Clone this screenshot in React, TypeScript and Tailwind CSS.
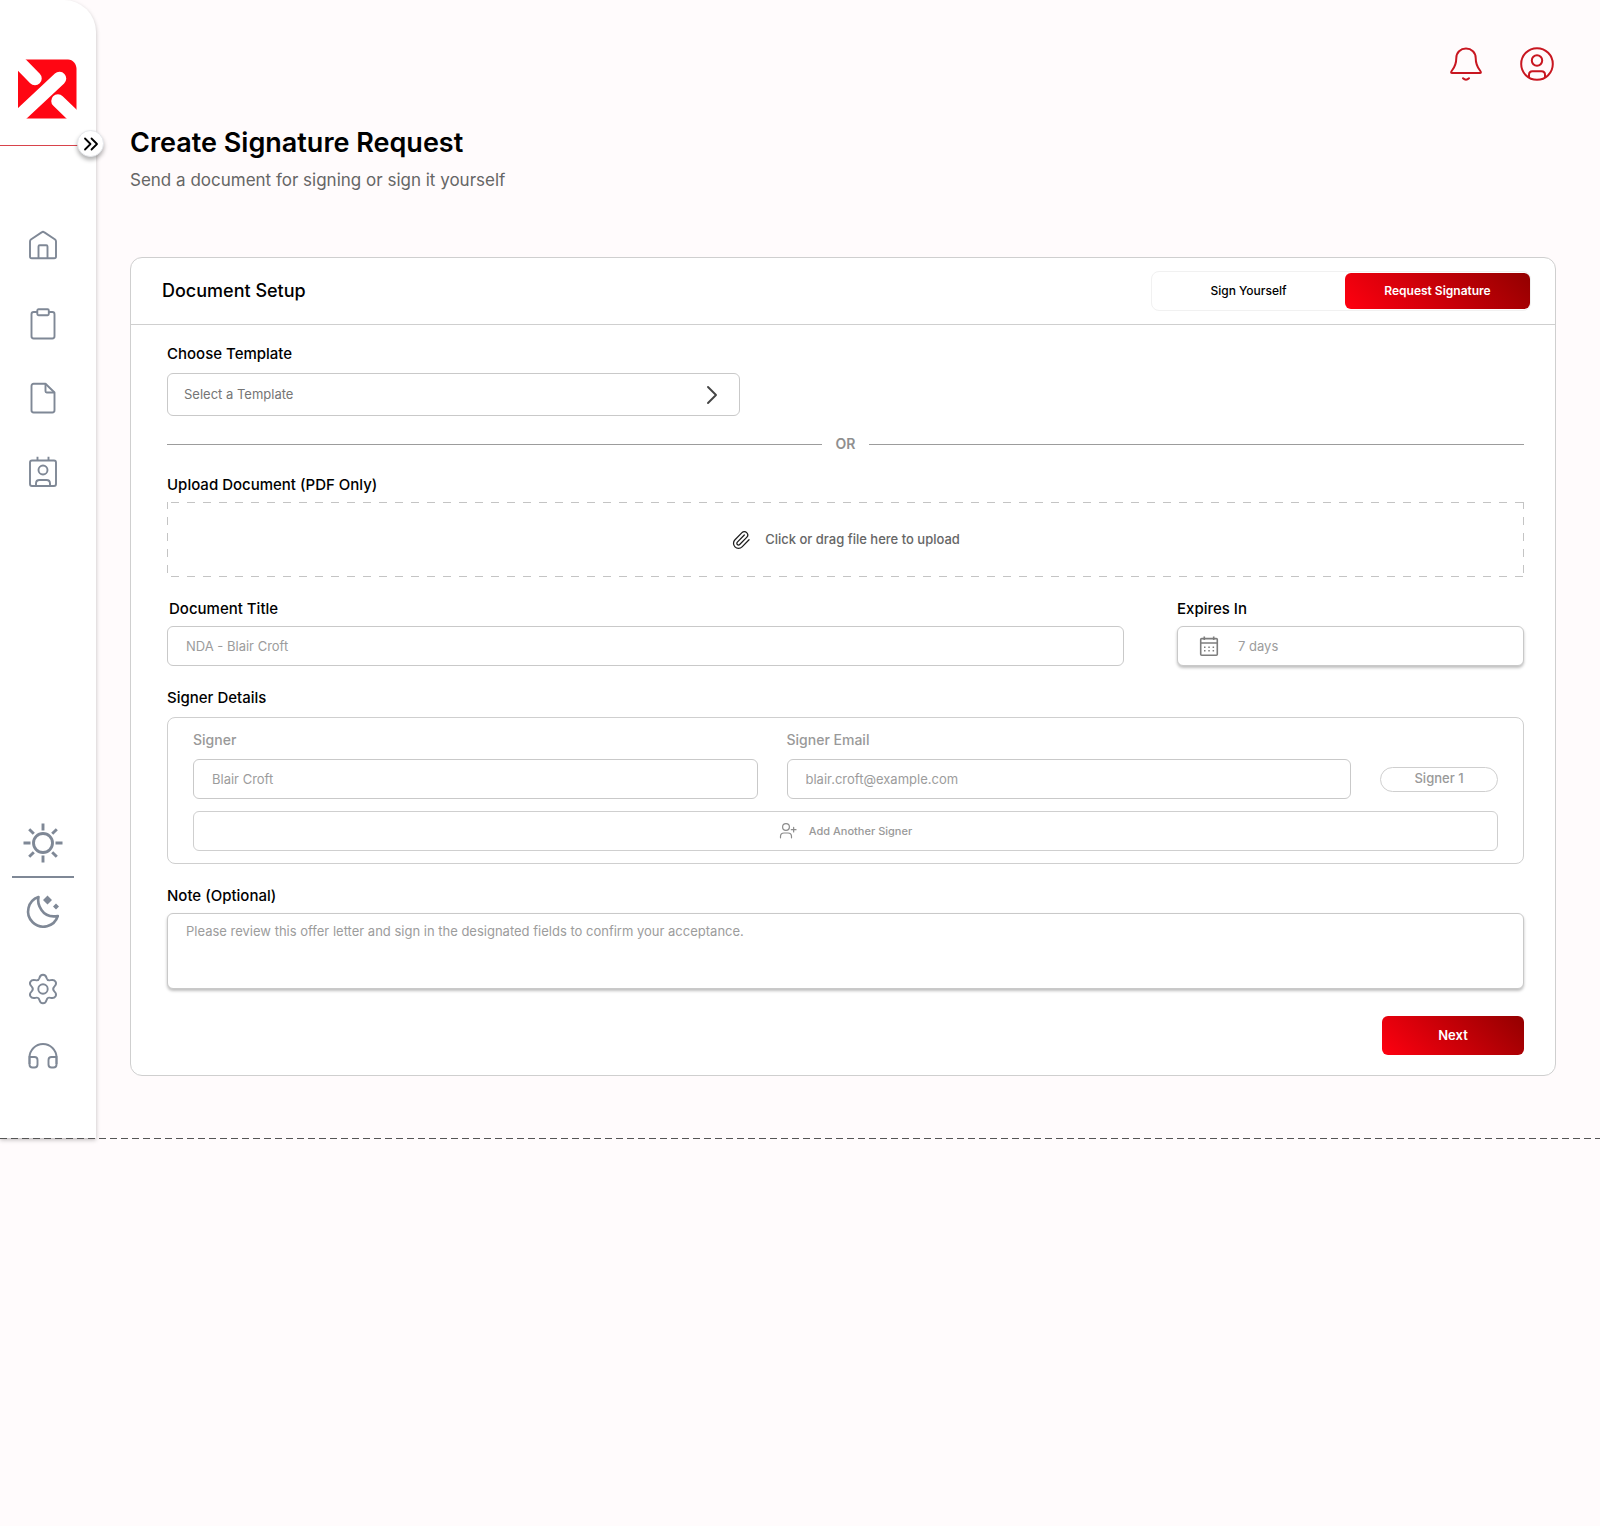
import React from 'react';
import { Paperclip } from 'lucide-react';

const field =
  'block w-full rounded-md border border-[#c9c9c9] bg-white text-[13px] text-[#555] placeholder:text-[#9c9c9c] outline-none focus:border-[#e3000f]';
const label = 'block text-[15px] leading-5 font-medium text-black';

const Logo = () => (
  <svg width="60" height="60" viewBox="0 0 60 60" aria-hidden="true">
    <path d="M1 .5H51C56 .5 59.500 5 59.500 10V59.500H1Z" fill="#ff0613" />
    <path d="M-6 -5L18 19.500M-4 63L42.500 19.500M41 42L66 66" stroke="#fff" strokeWidth="13.500" strokeLinecap="round" />
  </svg>
);

const HomeIcon = () => (
  <svg width="32" height="32" viewBox="0 0 32 32" fill="none" stroke="currentColor" strokeWidth="1.900" strokeLinejoin="round">
    <path d="M3 12.500Q3 11.300 3.900 10.500L14.600 3.400Q16 2.300 17.400 3.400L28.100 10.500Q29 11.300 29 12.500V27.500Q29 29.300 27.200 29.300H4.800Q3 29.300 3 27.500Z" />
    <path d="M11.500 29V17.500Q11.500 16.300 12.700 16.300H19.300Q20.500 16.300 20.500 17.500V29" />
  </svg>
);

const ClipboardIcon = () => (
  <svg width="32" height="32" viewBox="0 0 32 32" fill="none" stroke="currentColor" strokeWidth="1.900">
    <path d="M10.500 4H6.700Q4.500 4 4.500 6.200V28.300Q4.500 30.500 6.700 30.500H25.300Q27.500 30.500 27.500 28.300V6.200Q27.500 4 25.300 4H21.500" />
    <rect x="10.300" y="1.200" width="11.500" height="6" rx="1.200" />
  </svg>
);

const FileIcon = () => (
  <svg width="32" height="32" viewBox="0 0 32 32" fill="none" stroke="currentColor" strokeWidth="1.900" strokeLinejoin="round">
    <path d="M6.700 1.800H18.500L27.500 10.500V28.300Q27.500 30.500 25.300 30.500H6.700Q4.500 30.500 4.500 28.300V4Q4.500 1.800 6.700 1.800Z" />
    <path d="M18.500 1.800V9.300Q18.500 10.500 19.700 10.500H27.500" />
  </svg>
);

const ContactIcon = () => (
  <svg width="32" height="32" viewBox="0 0 32 32" fill="none" stroke="currentColor" strokeWidth="1.900">
    <rect x="3" y="4.500" width="26" height="25.500" rx="2" />
    <path d="M10.500 .8V4.500M21.500 .8V4.500" />
    <circle cx="16" cy="14" r="4.500" />
    <path d="M9 30V27.500Q9 24 12.500 24H19.500Q23 24 23 27.500V30" />
  </svg>
);

const SunIcon = () => (
  <svg width="40" height="40" viewBox="0 0 40 40" fill="none" stroke="currentColor" strokeWidth="2.900">
    <circle cx="20" cy="20" r="9.500" />
    <path d="M20 .5V7.500M20 32.500V39.500M.5 20H7.500M32.500 20H39.500M6.200 6.200L10.800 10.800M29.200 29.200L33.800 33.800M6.200 33.800L10.800 29.200M29.200 10.800L33.800 6.200" />
  </svg>
);

const MoonIcon = () => (
  <svg width="36" height="36" viewBox="0 0 36 36" fill="none" stroke="currentColor" strokeWidth="2.600" strokeLinejoin="round">
    <path d="M13.500 3A15.200 15.200 0 1 0 32.800 22C26 23.200 19.800 21 16.500 16C13.600 11.800 12.500 7.300 13.500 3Z" />
    <path d="M22.500 1.500L27 6L22.500 10.500L18 6ZM31 9.500L34 12.500L31 15.500L28 12.500Z" fill="currentColor" stroke="none" />
  </svg>
);

const GearIcon = () => (
  <svg width="32" height="32" viewBox="0 0 32 32" fill="none" stroke="currentColor" strokeWidth="1.900" strokeLinejoin="round">
    <circle cx="16" cy="16" r="4.700" />
    <path d="M12.300 5.200Q13.200 1.700 16 1.700Q18.800 1.700 19.700 5.200Q20.500 8 23.500 7.200Q27 6.200 28.600 8.800Q30 11.300 27.300 13.600Q25 16 27.300 18.400Q30 20.700 28.600 23.200Q27 25.800 23.500 24.800Q20.500 24 19.700 26.800Q18.800 30.300 16 30.300Q13.200 30.300 12.300 26.800Q11.500 24 8.500 24.800Q5 25.800 3.400 23.200Q2 20.700 4.700 18.400Q7 16 4.700 13.600Q2 11.300 3.400 8.800Q5 6.200 8.500 7.200Q11.500 8 12.300 5.200Z" />
  </svg>
);

const HeadphonesIcon = () => (
  <svg width="32" height="32" viewBox="0 0 32 32" fill="none" stroke="currentColor" strokeWidth="1.900">
    <path d="M2.500 24V17.500A13.500 13.500 0 0 1 29.500 17.500V24" />
    <path d="M2.500 17H7.500Q10.500 17 10.500 20V24.500Q10.500 27.500 7.500 27.500H5.500Q2.500 27.500 2.500 24.500ZM29.500 17H24.500Q21.500 17 21.500 20V24.500Q21.500 27.500 24.500 27.500H26.500Q29.500 27.500 29.500 24.500Z" />
  </svg>
);

const BellIcon = () => (
  <svg width="34" height="34" viewBox="0 0 34 34" fill="none" stroke="#c81620" strokeWidth="2" strokeLinejoin="round" strokeLinecap="round">
    <path d="M17 1.500C11.500 1.500 7.300 5.500 7.300 11C7.300 17.500 5.800 20 3 23.500C1.600 25.400 2 26 3.200 26H30.800C32 26 32.400 25.400 31 23.500C28.200 20 26.700 17.500 26.700 11C26.700 5.500 22.500 1.500 17 1.500Z" />
    <path d="M14 31.200Q17 34.200 20 31.200" />
  </svg>
);

const UserIcon = () => (
  <svg width="34" height="34" viewBox="0 0 34 34" fill="none" stroke="#c81620" strokeWidth="2">
    <circle cx="17" cy="17" r="15.800" />
    <circle cx="17" cy="13.500" r="5.200" />
    <path d="M9 30.500V27.800Q9 24.300 12.500 24.300H21.500Q25 24.300 25 27.800V30.500" />
  </svg>
);

const CalendarIcon = () => (
  <svg width="20" height="20" viewBox="0 0 20 20" fill="none" stroke="#7d7d7d" strokeWidth="1.600" aria-hidden="true">
    <rect x="1.700" y="2.600" width="16.600" height="16.600" rx="1" />
    <path d="M1.700 7H18.300M5.300 .4V4M14.700 .4V4" />
    <path d="M5 11.200H15.500M5 14.800H15.500" strokeWidth="1.500" strokeDasharray="1.500 2.800" />
  </svg>
);

const AddUserIcon = () => (
  <svg width="18" height="18" viewBox="0 0 18 18" fill="none" stroke="#8c8c8c" strokeWidth="1.200" strokeLinecap="round" aria-hidden="true">
    <circle cx="7" cy="5" r="3.400" />
    <path d="M1.500 15.800V14.500Q1.500 11 5 11H9Q12.500 11 12.500 14.500V15.800M12.300 7.700H17M14.650 5.400V10" />
  </svg>
);

const Sidebar = () => (
  <aside className="relative flex w-24 shrink-0 flex-col rounded-tr-[32px] bg-white text-[#7f8896] shadow-[0_2px_4px_rgba(0,0,0,0.25)]">
    <div className="relative border-b border-[#d8434b] pt-[59px] pb-[26px] pl-[17px]">
      <Logo />
      <button
        type="button"
        aria-label="Expand sidebar"
        className="absolute -right-2 -bottom-3 flex size-[27px] items-center justify-center rounded-full border border-gray-200 bg-white text-black shadow-[0_3px_4px_rgba(0,0,0,0.3)]"
      >
        <svg width="16" height="16" viewBox="0 0 16 16" fill="none" stroke="currentColor" strokeWidth="1.800" strokeLinecap="round" strokeLinejoin="round">
          <path d="M2 2.500L7.500 8L2 13.500M8.500 2.500L14 8L8.500 13.500" />
        </svg>
      </button>
    </div>
    <nav className="flex w-[86px] flex-1 flex-col items-center gap-[42px] pt-[83px] pb-[66px]">
      <a href="#home" aria-label="Home" className="mb-[5px]"><HomeIcon /></a>
      <a href="#requests" aria-label="Requests"><ClipboardIcon /></a>
      <a href="#documents" aria-label="Documents"><FileIcon /></a>
      <a href="#contacts" aria-label="Contacts"><ContactIcon /></a>
      <div className="mt-auto flex flex-col items-center">
        <button type="button" aria-label="Light theme"><SunIcon /></button>
        <div className="mt-[13px] mb-4 h-0.5 w-[62px] bg-[#7f8896]" />
        <button type="button" aria-label="Dark theme"><MoonIcon /></button>
        <a href="#settings" aria-label="Settings" className="mt-[43px]"><GearIcon /></a>
        <a href="#support" aria-label="Support" className="mt-[35px]"><HeadphonesIcon /></a>
      </div>
    </nav>
  </aside>
);

const App = () => {
  return (
    <div className="min-h-screen bg-[#fffbfc] font-['Inter',sans-serif]">
      <div className="flex">
        <Sidebar />

        <main className="min-w-0 flex-1 pt-[47px] pr-11 pb-[62px] pl-[34px]">
          <div className="flex justify-end gap-[37px] pr-0.5">
            <button type="button" aria-label="Notifications"><BellIcon /></button>
            <button type="button" aria-label="Account"><UserIcon /></button>
          </div>

          <h1 className="mt-11 text-[27px] leading-9 font-semibold text-black">Create Signature Request</h1>
          <p className="mt-2 text-[17px] leading-[22px] text-[#666]">Send a document for signing or sign it yourself</p>

          <form className="mt-[66px] rounded-xl border border-[#cfcfcf] bg-white">
            <div className="flex h-[67px] items-center justify-between border-b border-[#cfcfcf] pr-6 pl-[31px]">
              <h2 className="text-lg font-medium text-black">Document Setup</h2>
              <div className="flex h-10 w-[380px] items-center rounded-lg border border-[#f1f1f1] text-xs font-medium">
                <button type="button" className="h-full flex-1 text-black">Sign Yourself</button>
                <button
                  type="button"
                  className="h-9 w-[185px] rounded-md bg-linear-[45deg] from-[#ff0010] to-[#930000] font-semibold text-white"
                >
                  Request Signature
                </button>
              </div>
            </div>

            <div className="pt-[19px] pr-[31px] pb-5 pl-9">
              {/* Template picker */}
              <label htmlFor="template" className={label}>Choose Template</label>
              <div className="relative mt-[9px] w-[573px]">
                <select
                  id="template"
                  className="block h-[43px] w-full appearance-none rounded-md border border-[#c9c9c9] bg-white px-4 text-[13px] text-[#757575] outline-none"
                >
                  <option>Select a Template</option>
                </select>
                <svg className="pointer-events-none absolute top-3 right-[18px]" width="20" height="20" viewBox="0 0 20 20" fill="none" stroke="#444" strokeWidth="1.900" strokeLinecap="round" strokeLinejoin="round">
                  <path d="M6 2L14 10L6 18" />
                </svg>
              </div>

              <div className="mt-[18px] flex items-center gap-3.5 text-sm leading-5 font-semibold text-[#8f8f8f]">
                <span className="h-px flex-1 bg-[#9c9c9c]" />
                OR
                <span className="h-px flex-1 bg-[#9c9c9c]" />
              </div>

              {/* Upload */}
              <div className={`${label} mt-[21px]`} id="upload-label">Upload Document (PDF Only)</div>
              <label className="mt-[7px] flex h-[75px] cursor-pointer items-center justify-center gap-3.5 bg-[image:repeating-linear-gradient(90deg,transparent_0_4px,#c4c4c4_4px_12px,transparent_12px_16px),repeating-linear-gradient(90deg,transparent_0_4px,#c4c4c4_4px_12px,transparent_12px_16px),repeating-linear-gradient(0deg,transparent_0_4px,#c4c4c4_4px_12px,transparent_12px_16px),repeating-linear-gradient(0deg,transparent_0_4px,#c4c4c4_4px_12px,transparent_12px_16px)] bg-[size:100%_1px,100%_1px,1px_100%,1px_100%] bg-[position:0_0,0_100%,0_0,100%_0] bg-no-repeat text-[13px] font-medium text-[#666]">
                <Paperclip size={20} strokeWidth={1.5} className="text-[#1c1c1c]" aria-hidden="true" />
                Click or drag file here to upload
                <input type="file" accept="application/pdf" className="sr-only" aria-labelledby="upload-label" />
              </label>

              <div className="mt-[22px] flex gap-[53px]">
                <div className="flex-1">
                  <label htmlFor="title" className={`${label} pl-0.5`}>Document Title</label>
                  <input id="title" className={`${field} mt-[7px] h-10 px-[18px]`} placeholder="NDA - Blair Croft" />
                </div>
                <div className="w-[347px]">
                  <label htmlFor="expires" className={label}>Expires In</label>
                  <div className="relative mt-[7px]">
                    <input
                      id="expires"
                      className={`${field} h-10 pl-[60px] shadow-[0_2px_3px_rgba(0,0,0,0.25)]`}
                      placeholder="7 days"
                    />
                    <span className="pointer-events-none absolute top-2.5 left-[22px]"><CalendarIcon /></span>
                  </div>
                </div>
              </div>

              {/* Signers */}
              <h3 className={`${label} mt-[22px]`}>Signer Details</h3>
              <div className="mt-[9px] rounded-lg border border-[#cfcfcf] px-[25px] py-3">
                <div className="grid grid-cols-[1fr_1fr_118px] items-end gap-[29px]">
                  <div>
                    <label htmlFor="signer" className="block text-sm leading-5 font-medium text-[#999]">Signer</label>
                    <input id="signer" className={`${field} mt-[9px] h-10 px-[18px]`} placeholder="Blair Croft" />
                  </div>
                  <div>
                    <label htmlFor="email" className="block text-sm leading-5 font-medium text-[#999]">Signer Email</label>
                    <input id="email" type="email" className={`${field} mt-[9px] h-10 px-[18px]`} placeholder="blair.croft@example.com" />
                  </div>
                  <div className="flex h-10 items-center">
                    <span className="flex h-[25px] flex-1 items-center justify-center rounded-full border border-[#cfcfcf] text-[13px] font-medium text-[#999]">
                      Signer 1
                    </span>
                  </div>
                </div>
                <button
                  type="button"
                  className="mt-3 flex h-10 w-full items-center justify-center gap-3 rounded-md border border-[#cfcfcf] text-[11px] font-medium text-[#999]"
                >
                  <AddUserIcon />
                  Add Another Signer
                </button>
              </div>

              <label htmlFor="note" className={`${label} mt-[22px]`}>Note (Optional)</label>
              <textarea
                id="note"
                className={`${field} mt-[7px] h-[76px] resize-none px-[18px] py-2 shadow-[0_2px_3px_rgba(0,0,0,0.25)]`}
                placeholder="Please review this offer letter and sign in the designated fields to confirm your acceptance."
              />

              <div className="mt-[27px] flex justify-end">
                <button
                  type="submit"
                  className="h-[39px] w-[142px] rounded-md bg-linear-[45deg] from-[#ff0010] to-[#930000] text-[13px] font-semibold text-white"
                >
                  Next
                </button>
              </div>
            </div>
          </form>
        </main>
      </div>
      <div className="relative h-px bg-[repeating-linear-gradient(90deg,#555_0_7px,transparent_7px_11px)]" />
    </div>
  );
};

export default App;
